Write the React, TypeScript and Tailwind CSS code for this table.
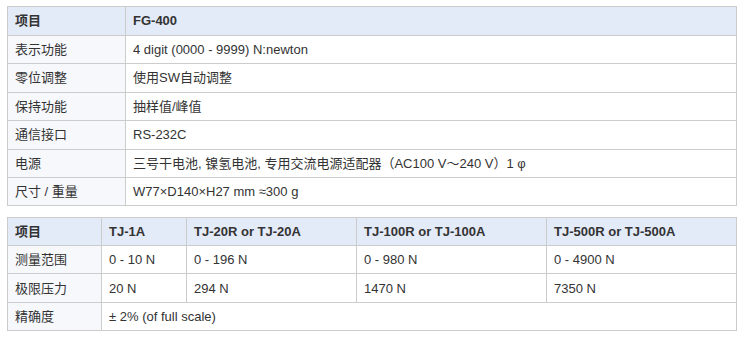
import React from 'react';

const font = { fontFamily: '"Liberation Sans", Arial, "Noto Sans CJK SC", sans-serif' };

const specRows: [string, React.ReactNode][] = [
  ['表示功能', '4 digit (0000 - 9999) N:newton'],
  ['零位调整', '使用SW自动调整'],
  ['保持功能', '抽样值/峰值'],
  ['通信接口', 'RS-232C'],
  ['电源', '三号干电池, 镍氢电池, 专用交流电源适配器（AC100 V～240 V）1 φ'],
  ['尺寸 / 重量', 'W77×D140×H27 mm ≈300 g'],
];

const th = 'border border-[#cccccc] bg-[#e3eaf8] px-[7px] text-left font-bold';
const td = 'border border-[#cccccc] px-[7px]';

const App: React.FC = () => {
  return (
    <div className="w-[743px] h-[338px] bg-white pt-[6px] pl-[7px] text-[13px] text-[#333333]" style={font}>
      {/* FG-400 spec table */}
      <table className="w-[730px] border-collapse table-fixed">
        <colgroup>
          <col className="w-[118px]" />
          <col />
        </colgroup>
        <thead>
          <tr className="h-[29px]">
            <th className={th}>项目</th>
            <th className={th}>FG-400</th>
          </tr>
        </thead>
        <tbody>
          {specRows.map(([k, v]) => (
            <tr key={k} className="h-[28.4px]">
              <td className={`${td} bg-[#f7f8fc]`}>{k}</td>
              <td className={td}>{v}</td>
            </tr>
          ))}
        </tbody>
      </table>

      {/* TJ sensor table */}
      <table className="mt-[11px] w-[730px] border-collapse table-fixed">
        <colgroup>
          <col className="w-[94px]" />
          <col className="w-[85px]" />
          <col className="w-[170px]" />
          <col className="w-[190px]" />
          <col />
        </colgroup>
        <thead>
          <tr className="h-[28px]">
            <th className={th}>项目</th>
            <th className={th}>TJ-1A</th>
            <th className={th}>TJ-20R or TJ-20A</th>
            <th className={th}>TJ-100R or TJ-100A</th>
            <th className={th}>TJ-500R or TJ-500A</th>
          </tr>
        </thead>
        <tbody>
          <tr className="h-[28px]">
            <td className={`${td} bg-[#f7f8fc]`}>测量范围</td>
            <td className={td}>0 - 10 N</td>
            <td className={td}>0 - 196 N</td>
            <td className={td}>0 - 980 N</td>
            <td className={td}>0 - 4900 N</td>
          </tr>
          <tr className="h-[29px]">
            <td className={`${td} bg-[#f7f8fc]`}>极限压力</td>
            <td className={td}>20 N</td>
            <td className={td}>294 N</td>
            <td className={td}>1470 N</td>
            <td className={td}>7350 N</td>
          </tr>
          <tr className="h-[28px]">
            <td className={`${td} bg-[#f7f8fc]`}>精确度</td>
            <td className={td} colSpan={4}>± 2% (of full scale)</td>
          </tr>
        </tbody>
      </table>
    </div>
  );
};

export default App;
